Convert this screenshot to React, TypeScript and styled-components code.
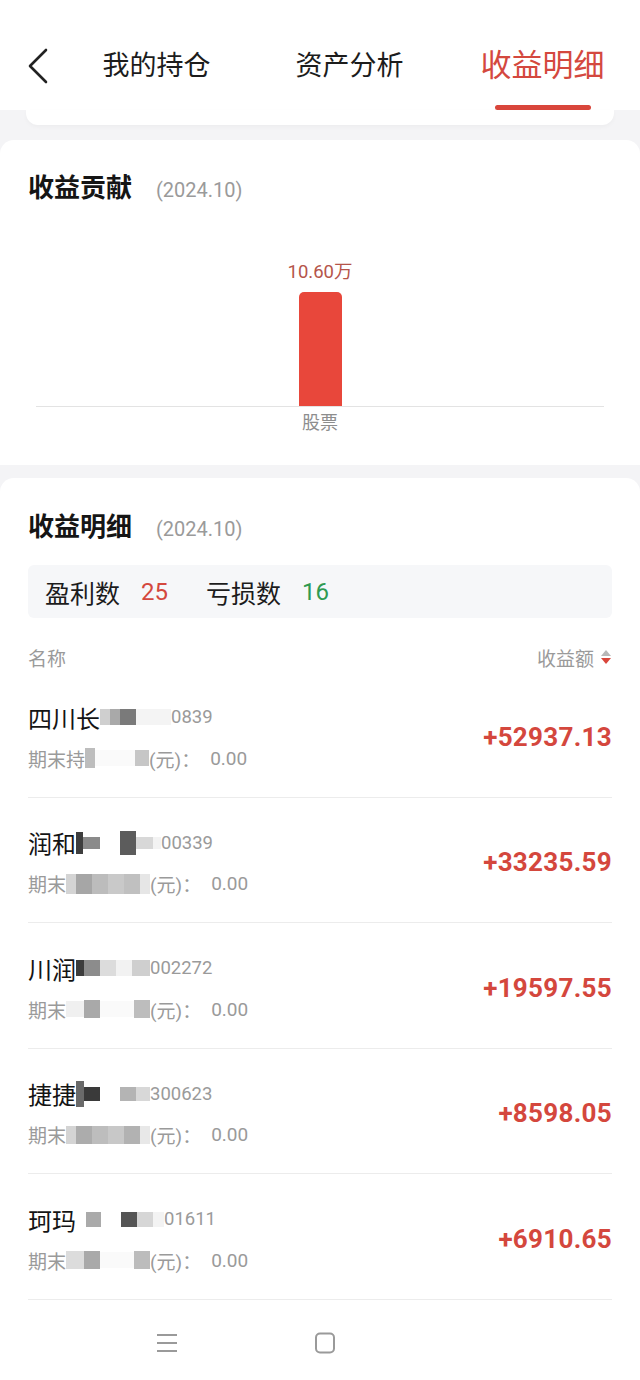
import React from 'react'
import styled, { createGlobalStyle } from 'styled-components'

interface Tile {
  w: number
  c: string
  h?: number
}

interface Holding {
  name: string
  nameTiles: Tile[]
  code: string
  subPrefix: string
  subTiles: Tile[]
  profit: string
}

const GlobalStyle = createGlobalStyle`
  *, *::before, *::after {
    box-sizing: border-box;
  }
  html, body {
    margin: 0;
    padding: 0;
    background: #f4f4f6;
  }
  body {
    font-family: Roboto, "Noto Sans CJK SC", sans-serif;
    color: #1a1a1a;
  }
`

const Page = styled.div`
  width: 640px;
  min-height: 1380px;
  background: #f4f4f6;
  display: flex;
  flex-direction: column;
`

const Header = styled.div`
  background: #fff;
  height: 110px;
  display: flex;
  align-items: flex-start;
`

const BackButton = styled.div`
  width: 60px;
  padding: 48px 0 0 26px;
`

const Tabs = styled.div`
  flex: 1;
  display: flex;
`

const Tab = styled.div<{ $active?: boolean }>`
  width: 193px;
  display: flex;
  flex-direction: column;
  align-items: center;
  padding-top: 46px;
  font-size: ${({ $active }) => ($active ? '31px' : '27px')};
  line-height: 40px;
  color: ${({ $active }) => ($active ? '#d4483e' : '#1c1c1c')};
`

const Underline = styled.div<{ $show?: boolean }>`
  width: 96px;
  height: 5px;
  border-radius: 3px;
  margin-top: 19px;
  background: ${({ $show }) => ($show ? '#d9463b' : 'transparent')};
`

const HeaderTail = styled.div`
  margin: 0 26px;
  height: 15px;
  background: #fff;
  border-radius: 0 0 12px 12px;
  box-shadow: 0 2px 4px rgba(0, 0, 0, 0.03);
`

const Card = styled.div<{ $gap: number }>`
  margin-top: ${({ $gap }) => $gap}px;
  background: #fff;
  border-radius: 14px 14px 0 0;
  padding: 0 28px;
`

const CardTitle = styled.div<{ $top: number }>`
  padding-top: ${({ $top }) => $top}px;
  height: ${({ $top }) => $top + 36}px;
  display: flex;
  align-items: baseline;
  line-height: 36px;
  overflow: hidden;
`

const TitleText = styled.span`
  font-size: 26px;
  font-weight: 700;
  color: #151515;
`

const TitleDate = styled.span`
  font-size: 20px;
  color: #9a9a9a;
  margin-left: 24px;
`

const Chart = styled.div`
  margin: 54px 8px 0;
  padding-bottom: 30px;
  display: flex;
  flex-direction: column;
  align-items: center;
`

const BarValue = styled.div`
  font-size: 18.5px;
  line-height: 24px;
  color: #b5544a;
`

const Bar = styled.div`
  margin-top: 8px;
  width: 43px;
  border-radius: 5px 5px 0 0;
  background: #e8473b;
`

const Baseline = styled.div`
  align-self: stretch;
  height: 1px;
  background: #e3e3e3;
`

const AxisLabel = styled.div`
  margin-top: 4px;
  font-size: 18px;
  line-height: 24px;
  color: #8d8d8d;
`

const StatsBox = styled.div`
  margin-top: 20px;
  width: 100%;
  height: 53px;
  background: #f6f7f9;
  border-radius: 6px;
  display: flex;
  align-items: center;
  padding: 0 17px;
  font-size: 25px;
`

const StatLabel = styled.span`
  color: #1c1c1c;
`

const StatValue = styled.span<{ $color: string }>`
  color: ${({ $color }) => $color};
  margin: 0 38px 0 21px;
  font-size: 24px;
`

const ListHeader = styled.div`
  margin: 27px 0 3px;
  height: 24px;
  display: flex;
  align-items: center;
  justify-content: space-between;
  font-size: 19px;
  color: #9a9a9a;
`

const SortLabel = styled.span`
  display: flex;
  align-items: center;
  gap: 6px;
`

const Row = styled.div`
  display: flex;
  align-items: center;
  justify-content: space-between;
  padding: 30px 0 25.5px;
  border-bottom: 1px solid #ececec;
`

const RowInfo = styled.div`
  display: flex;
  flex-direction: column;
`

const NameLine = styled.div`
  height: 30px;
  display: flex;
  align-items: center;
`

const Name = styled.span`
  font-size: 24px;
  color: #141414;
`

const Code = styled.span`
  font-size: 18.5px;
  color: #9a9a9a;
`

const SubLine = styled.div`
  margin-top: 13px;
  height: 26px;
  display: flex;
  align-items: center;
  font-size: 19px;
  color: #9a9a9a;
`

const SubValue = styled.span`
  margin-left: 10px;
`

const Mosaic = styled.span`
  display: inline-flex;
  align-items: center;
`

const MosaicTile = styled.span<{ $w: number; $c: string; $h: number }>`
  display: inline-block;
  width: ${({ $w }) => $w}px;
  height: ${({ $h }) => $h}px;
  background: ${({ $c }) => $c};
`

const Profit = styled.div`
  font-size: 26px;
  font-weight: 700;
  color: #d4473d;
  letter-spacing: 0.3px;
`

const NavBar = styled.div`
  flex: 1;
  background: #fff;
  display: flex;
  align-items: center;
  padding-top: 6px;
  min-height: 76px;
`

const NavSlot = styled.div`
  width: 158px;
  display: flex;
  justify-content: center;
  &:first-child {
    margin-left: 88px;
  }
`

const holdings: Holding[] = [
  {
    name: '四川长',
    nameTiles: [
      { w: 10, c: '#cfcfcf' },
      { w: 10, c: '#a9a9a9' },
      { w: 16, c: '#7a7a7a' },
      { w: 35, c: '#f4f4f4' },
    ],
    code: '0839',
    subPrefix: '期末持',
    subTiles: [
      { w: 10, c: '#bdbdbd', h: 20 },
      { w: 40, c: '#fafafa' },
      { w: 14, c: '#c6c6c6' },
    ],
    profit: '+52937.13',
  },
  {
    name: '润和',
    nameTiles: [
      { w: 7, c: '#3e3e3e', h: 22 },
      { w: 17, c: '#8a8a8a', h: 12 },
      { w: 20, c: '#fff' },
      { w: 16, c: '#5c5c5c', h: 24 },
      { w: 17, c: '#d8d8d8', h: 12 },
      { w: 8, c: '#f3f3f3', h: 12 },
    ],
    code: '00339',
    subPrefix: '期末',
    subTiles: [
      { w: 10, c: '#d4d4d4', h: 20 },
      { w: 16, c: '#a6a6a6', h: 20 },
      { w: 16, c: '#bcbcbc', h: 20 },
      { w: 16, c: '#c9c9c9', h: 20 },
      { w: 16, c: '#c0c0c0', h: 20 },
      { w: 10, c: '#e6e6e6', h: 20 },
    ],
    profit: '+33235.59',
  },
  {
    name: '川润',
    nameTiles: [
      { w: 8, c: '#3c3c3c', h: 16 },
      { w: 16, c: '#8c8c8c', h: 16 },
      { w: 16, c: '#dcdcdc', h: 16 },
      { w: 16, c: '#f2f2f2', h: 16 },
      { w: 18, c: '#cfcfcf', h: 16 },
    ],
    code: '002272',
    subPrefix: '期末',
    subTiles: [
      { w: 18, c: '#f0f0f0' },
      { w: 16, c: '#a9a9a9', h: 18 },
      { w: 34, c: '#fafafa' },
      { w: 16, c: '#bdbdbd', h: 18 },
    ],
    profit: '+19597.55',
  },
  {
    name: '捷捷',
    nameTiles: [
      { w: 8, c: '#6a6a6a', h: 26 },
      { w: 16, c: '#3a3a3a', h: 14 },
      { w: 20, c: '#fff' },
      { w: 16, c: '#b4b4b4', h: 14 },
      { w: 14, c: '#d8d8d8', h: 14 },
    ],
    code: '300623',
    subPrefix: '期末',
    subTiles: [
      { w: 10, c: '#d4d4d4', h: 18 },
      { w: 16, c: '#acacac', h: 18 },
      { w: 16, c: '#bdbdbd', h: 18 },
      { w: 16, c: '#c8c8c8', h: 18 },
      { w: 16, c: '#b2b2b2', h: 18 },
      { w: 10, c: '#e8e8e8', h: 18 },
    ],
    profit: '+8598.05',
  },
  {
    name: '珂玛',
    nameTiles: [
      { w: 10, c: '#fff' },
      { w: 15, c: '#aaaaaa', h: 15 },
      { w: 20, c: '#fff' },
      { w: 16, c: '#555555', h: 15 },
      { w: 16, c: '#d6d6d6', h: 15 },
      { w: 11, c: '#f3f3f3', h: 15 },
    ],
    code: '01611',
    subPrefix: '期末',
    subTiles: [
      { w: 18, c: '#dcdcdc', h: 18 },
      { w: 16, c: '#a9a9a9', h: 18 },
      { w: 34, c: '#fafafa' },
      { w: 16, c: '#bcbcbc', h: 18 },
    ],
    profit: '+6910.65',
  },
]

function Tiles({ tiles }: { tiles: Tile[] }) {
  return (
    <Mosaic>
      {tiles.map((t, i) => (
        <MosaicTile key={i} $w={t.w} $c={t.c} $h={t.h ?? 16} />
      ))}
    </Mosaic>
  )
}

function BackIcon() {
  return (
    <svg width="24" height="36" viewBox="0 0 24 36">
      <path d="M20 2 L4 18 L20 34" fill="none" stroke="#222" strokeWidth="2.6" strokeLinecap="round" strokeLinejoin="round" />
    </svg>
  )
}

function SortIcon() {
  return (
    <svg width="12" height="16" viewBox="0 0 12 16">
      <path d="M6 1 L11 7 L1 7 Z" fill="#b8b8b8" />
      <path d="M1 9 L11 9 L6 15 Z" fill="#d9463b" />
    </svg>
  )
}

function MenuIcon() {
  return (
    <svg width="22" height="22" viewBox="0 0 22 22">
      <path d="M1 3 H21 M1 11 H21 M1 19 H21" stroke="#9a9a9a" strokeWidth="2" />
    </svg>
  )
}

function HomeIcon() {
  return (
    <svg width="22" height="22" viewBox="0 0 22 22">
      <rect x="2" y="1.5" width="18" height="19" rx="4" fill="none" stroke="#9a9a9a" strokeWidth="2" />
    </svg>
  )
}

export default function App() {
  const tabs = ['我的持仓', '资产分析', '收益明细']
  const active = 2

  return (
    <Page>
      <GlobalStyle />
      <Header>
        <BackButton>
          <BackIcon />
        </BackButton>
        <Tabs>
          {tabs.map((t, i) => (
            <Tab key={t} $active={i === active}>
              {t}
              <Underline $show={i === active} />
            </Tab>
          ))}
        </Tabs>
      </Header>
      <HeaderTail />

      <Card $gap={15}>
        <CardTitle $top={30}>
          <TitleText>收益贡献</TitleText>
          <TitleDate>(2024.10)</TitleDate>
        </CardTitle>
        <Chart>
          <BarValue>10.60万</BarValue>
          <Bar style={{ height: 114 }} />
          <Baseline />
          <AxisLabel>股票</AxisLabel>
        </Chart>
      </Card>

      <Card $gap={13}>
        <CardTitle $top={31}>
          <TitleText>收益明细</TitleText>
          <TitleDate>(2024.10)</TitleDate>
        </CardTitle>
        <StatsBox>
          <StatLabel>盈利数</StatLabel>
          <StatValue $color="#d4483e">25</StatValue>
          <StatLabel>亏损数</StatLabel>
          <StatValue $color="#2f9a52">16</StatValue>
        </StatsBox>
        <ListHeader>
          <span>名称</span>
          <SortLabel>
            收益额
            <SortIcon />
          </SortLabel>
        </ListHeader>
        {holdings.map((h) => (
          <Row key={h.profit}>
            <RowInfo>
              <NameLine>
                <Name>{h.name}</Name>
                <Tiles tiles={h.nameTiles} />
                <Code>{h.code}</Code>
              </NameLine>
              <SubLine>
                {h.subPrefix}
                <Tiles tiles={h.subTiles} />
                (元)：
                <SubValue>0.00</SubValue>
              </SubLine>
            </RowInfo>
            <Profit>{h.profit}</Profit>
          </Row>
        ))}
      </Card>

      <NavBar>
        <NavSlot>
          <MenuIcon />
        </NavSlot>
        <NavSlot>
          <HomeIcon />
        </NavSlot>
      </NavBar>
    </Page>
  )
}
